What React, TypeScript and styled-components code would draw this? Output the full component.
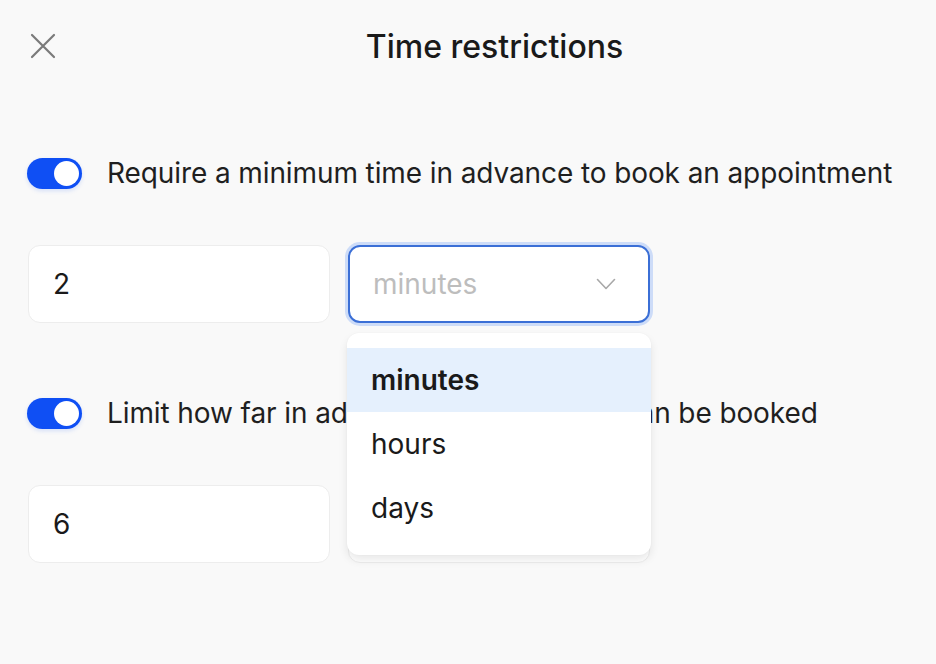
import React from "react";
import styled, { createGlobalStyle } from "styled-components";

const GlobalStyle = createGlobalStyle`
  html, body {
    margin: 0;
    padding: 0;
    background: #f9f9f9;
  }
  body {
    font-family: Inter, "Noto Sans", "Liberation Sans", sans-serif;
    color: #1a1a1a;
  }
`;

const Page = styled.div`
  width: 936px;
  height: 664px;
  box-sizing: border-box;
  padding: 21px 28px 0 27px;
  display: flex;
  flex-direction: column;
`;

const Header = styled.div`
  display: grid;
  grid-template-columns: 54px 1fr 0;
  align-items: center;
  height: 50px;
`;

const CloseButton = styled.button`
  width: 32px;
  height: 32px;
  padding: 0 0 0 3px;
  border: none;
  background: none;
  display: flex;
  align-items: center;
  justify-content: flex-start;
  cursor: pointer;
`;

const Title = styled.h1`
  margin: 0;
  text-align: center;
  font-size: 32px;
  font-weight: 500;
  letter-spacing: 0;
  color: #1a1a1a;
`;

const Section = styled.section<{ $top: number }>`
  margin-top: ${(p) => p.$top}px;
  display: flex;
  flex-direction: column;
  gap: 56px;
`;

const ToggleRow = styled.label`
  display: flex;
  align-items: center;
  gap: 25px;
  font-size: 28px;
  letter-spacing: -0.1px;
  color: #1f1f1f;
  height: 32px;
  white-space: nowrap;
`;

const Track = styled.span<{ $on: boolean }>`
  width: 55px;
  height: 31px;
  border-radius: 16px;
  background: ${(p) => (p.$on ? "#0f4ff4" : "#d8d8d8")};
  display: flex;
  align-items: center;
  justify-content: ${(p) => (p.$on ? "flex-end" : "flex-start")};
  padding: 0 3px;
  box-sizing: border-box;
  flex-shrink: 0;
  box-shadow: 0 2px 4px rgba(15, 79, 244, 0.15);
`;

const Knob = styled.span`
  width: 25px;
  height: 25px;
  border-radius: 50%;
  background: #fff;
`;

const FieldRow = styled.div`
  display: grid;
  grid-template-columns: 302px 302px;
  gap: 18px;
  margin-left: 1px;
`;

const NumberBox = styled.div`
  height: 78px;
  box-sizing: border-box;
  background: #fff;
  border: 1px solid #ededed;
  border-radius: 12px;
  display: flex;
  align-items: center;
  padding-left: 24px;
  font-size: 28px;
  color: #1a1a1a;
`;

const SelectWrap = styled.div`
  position: relative;
`;

const SelectBox = styled.div<{ $focused: boolean }>`
  height: 78px;
  box-sizing: border-box;
  background: #fff;
  border: ${(p) => (p.$focused ? "2px solid #3b6fd6" : "1px solid #ededed")};
  box-shadow: ${(p) => (p.$focused ? "0 0 0 3px #cddcf8" : "none")};
  border-radius: 12px;
  display: flex;
  align-items: center;
  justify-content: space-between;
  padding: 0 32px 0 23px;
  font-size: 28px;
  color: #bdbdbd;
`;

const Menu = styled.ul`
  position: absolute;
  top: 88px;
  left: -1px;
  right: -1px;
  margin: 0;
  padding: 15px 0;
  list-style: none;
  background: #fff;
  border-radius: 12px;
  box-shadow: 0 5px 10px rgba(0, 0, 0, 0.09), 0 0 2px rgba(0, 0, 0, 0.04);
  z-index: 2;
`;

const MenuItem = styled.li<{ $active: boolean }>`
  height: 64px;
  display: flex;
  align-items: center;
  padding-left: 24px;
  font-size: 28px;
  font-weight: ${(p) => (p.$active ? 600 : 400)};
  background: ${(p) => (p.$active ? "#e5f0fd" : "transparent")};
  color: #1a1a1a;
`;

const CloseIcon = () => (
  <svg width="26" height="26" viewBox="0 0 26 26" fill="none">
    <path d="M2 2L24 24M24 2L2 24" stroke="#7a7a7a" strokeWidth="2.2" strokeLinecap="round" />
  </svg>
);

const ChevronIcon = () => (
  <svg width="20" height="12" viewBox="0 0 20 12" fill="none">
    <path d="M1.5 1.5L10 10.5L18.5 1.5" stroke="#a8a8a8" strokeWidth="1.6" strokeLinecap="round" strokeLinejoin="round" />
  </svg>
);

const units = ["minutes", "hours", "days"];

const Toggle = ({ on }: { on: boolean }) => (
  <Track $on={on}>
    <Knob />
  </Track>
);

export default function App() {
  return (
    <>
      <GlobalStyle />
      <Page>
        <Header>
          <CloseButton aria-label="Close">
            <CloseIcon />
          </CloseButton>
          <Title>Time restrictions</Title>
          <span />
        </Header>

        <Section $top={86}>
          <ToggleRow>
            <Toggle on />
            Require a minimum time in advance to book an appointment
          </ToggleRow>
          <FieldRow>
            <NumberBox>2</NumberBox>
            <SelectWrap>
              <SelectBox $focused>
                minutes
                <ChevronIcon />
              </SelectBox>
              <Menu>
                {units.map((u, i) => (
                  <MenuItem key={u} $active={i === 0}>
                    {u}
                  </MenuItem>
                ))}
              </Menu>
            </SelectWrap>
          </FieldRow>
        </Section>

        <Section $top={74}>
          <ToggleRow>
            <Toggle on />
            Limit how far in advance appointments can be booked
          </ToggleRow>
          <FieldRow>
            <NumberBox>6</NumberBox>
            <SelectWrap>
              {/* covered by the open menu above */}
              <SelectBox $focused={false} />
            </SelectWrap>
          </FieldRow>
        </Section>
      </Page>
    </>
  );
}
